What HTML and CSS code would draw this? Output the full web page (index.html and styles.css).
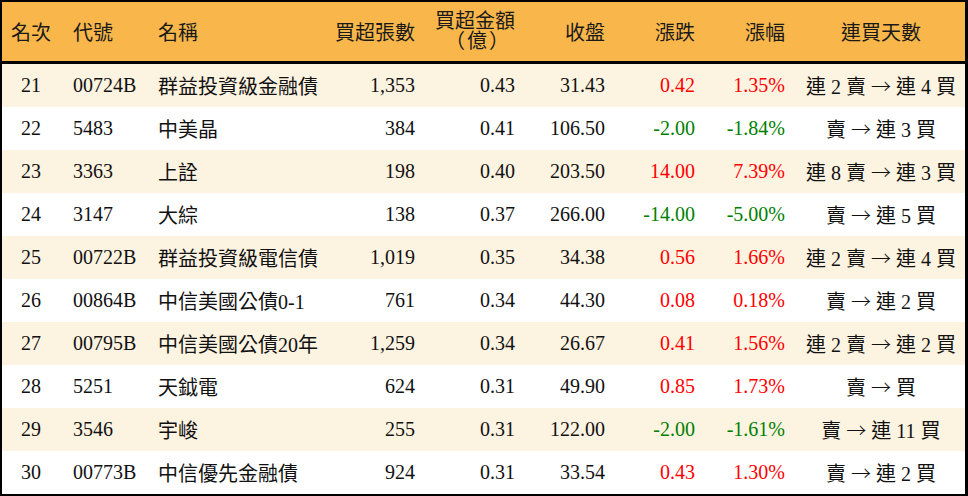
FILE: index.html
```html
<!DOCTYPE html>
<html lang="zh-Hant">
<head>
<meta charset="utf-8">
<title>買超排行</title>
<link rel="stylesheet" href="styles.css">
</head>
<body>
<div class="board">
  <div class="row head">
    <div class="c c1">名次</div>
    <div class="c c2">代號</div>
    <div class="c c3">名稱</div>
    <div class="c num">買超張數</div>
    <div class="c num two"><span class="line">買超金額</span><span class="line">（億）</span></div>
    <div class="c num">收盤</div>
    <div class="c num">漲跌</div>
    <div class="c num">漲幅</div>
    <div class="c c9">連買天數</div>
  </div>

  <div class="row odd">
    <div class="c c1">21</div><div class="c c2">00724B</div><div class="c c3">群益投資級金融債</div>
    <div class="c num">1,353</div><div class="c num">0.43</div><div class="c num">31.43</div>
    <div class="c num up">0.42</div><div class="c num up">1.35%</div><div class="c c9">連 2 賣 <span class="arrow">→</span> 連 4 買</div>
  </div>
  <div class="row">
    <div class="c c1">22</div><div class="c c2">5483</div><div class="c c3">中美晶</div>
    <div class="c num">384</div><div class="c num">0.41</div><div class="c num">106.50</div>
    <div class="c num down">-2.00</div><div class="c num down">-1.84%</div><div class="c c9">賣 <span class="arrow">→</span> 連 3 買</div>
  </div>
  <div class="row odd">
    <div class="c c1">23</div><div class="c c2">3363</div><div class="c c3">上詮</div>
    <div class="c num">198</div><div class="c num">0.40</div><div class="c num">203.50</div>
    <div class="c num up">14.00</div><div class="c num up">7.39%</div><div class="c c9">連 8 賣 <span class="arrow">→</span> 連 3 買</div>
  </div>
  <div class="row">
    <div class="c c1">24</div><div class="c c2">3147</div><div class="c c3">大綜</div>
    <div class="c num">138</div><div class="c num">0.37</div><div class="c num">266.00</div>
    <div class="c num down">-14.00</div><div class="c num down">-5.00%</div><div class="c c9">賣 <span class="arrow">→</span> 連 5 買</div>
  </div>
  <div class="row odd">
    <div class="c c1">25</div><div class="c c2">00722B</div><div class="c c3">群益投資級電信債</div>
    <div class="c num">1,019</div><div class="c num">0.35</div><div class="c num">34.38</div>
    <div class="c num up">0.56</div><div class="c num up">1.66%</div><div class="c c9">連 2 賣 <span class="arrow">→</span> 連 4 買</div>
  </div>
  <div class="row">
    <div class="c c1">26</div><div class="c c2">00864B</div><div class="c c3">中信美國公債0-1</div>
    <div class="c num">761</div><div class="c num">0.34</div><div class="c num">44.30</div>
    <div class="c num up">0.08</div><div class="c num up">0.18%</div><div class="c c9">賣 <span class="arrow">→</span> 連 2 買</div>
  </div>
  <div class="row odd">
    <div class="c c1">27</div><div class="c c2">00795B</div><div class="c c3">中信美國公債20年</div>
    <div class="c num">1,259</div><div class="c num">0.34</div><div class="c num">26.67</div>
    <div class="c num up">0.41</div><div class="c num up">1.56%</div><div class="c c9">連 2 賣 <span class="arrow">→</span> 連 2 買</div>
  </div>
  <div class="row">
    <div class="c c1">28</div><div class="c c2">5251</div><div class="c c3">天鉞電</div>
    <div class="c num">624</div><div class="c num">0.31</div><div class="c num">49.90</div>
    <div class="c num up">0.85</div><div class="c num up">1.73%</div><div class="c c9">賣 <span class="arrow">→</span> 買</div>
  </div>
  <div class="row odd">
    <div class="c c1">29</div><div class="c c2">3546</div><div class="c c3">宇峻</div>
    <div class="c num">255</div><div class="c num">0.31</div><div class="c num">122.00</div>
    <div class="c num down">-2.00</div><div class="c num down">-1.61%</div><div class="c c9">賣 <span class="arrow">→</span> 連 11 買</div>
  </div>
  <div class="row">
    <div class="c c1">30</div><div class="c c2">00773B</div><div class="c c3">中信優先金融債</div>
    <div class="c num">924</div><div class="c num">0.31</div><div class="c num">33.54</div>
    <div class="c num up">0.43</div><div class="c num up">1.30%</div><div class="c c9">賣 <span class="arrow">→</span> 連 2 買</div>
  </div>
</div>
</body>
</html>
```

FILE: styles.css
```css
html, body {
  margin: 0;
  padding: 0;
  background: #ffffff;
}

.board {
  width: 968px;
  height: 496px;
  box-sizing: border-box;
  border-style: solid;
  border-color: #000000;
  border-width: 2px 3px 2px 2px;
  font-family: "Liberation Serif", "Noto Sans CJK TC", serif;
  font-size: 20px;
  color: #111111;
}

.row {
  display: grid;
  grid-template-columns: 58px 85px 185px 97px 100px 90px 90px 90px 168px;
  height: 43px;
  align-items: center;
  background: #ffffff;
}

.row.odd {
  background: #fdf3e1;
}

.row.head {
  height: 59px;
  background: #f9b74b;
  border-bottom: 3px solid #000000;
  box-sizing: content-box;
  color: #1a1a1a;
}

.c {
  white-space: nowrap;
}

.c1 {
  text-align: center;
}

.c2,
.c3 {
  padding-left: 13px;
}

.num {
  text-align: right;
  padding-right: 12px;
}

.two {
  display: flex;
  flex-direction: column;
  align-items: flex-end;
}

.two .line {
  display: block;
  height: 19px;
  line-height: 19px;
}

.two .line + .line {
  margin-top: 1px;
  padding-right: 4px;
  letter-spacing: 2px;
}

.c9 {
  text-align: center;
}

.arrow {
  font-family: "Noto Sans CJK TC", sans-serif;
  font-weight: 300;
}

.up {
  color: #ff0000;
}

.down {
  color: #008000;
}
```
